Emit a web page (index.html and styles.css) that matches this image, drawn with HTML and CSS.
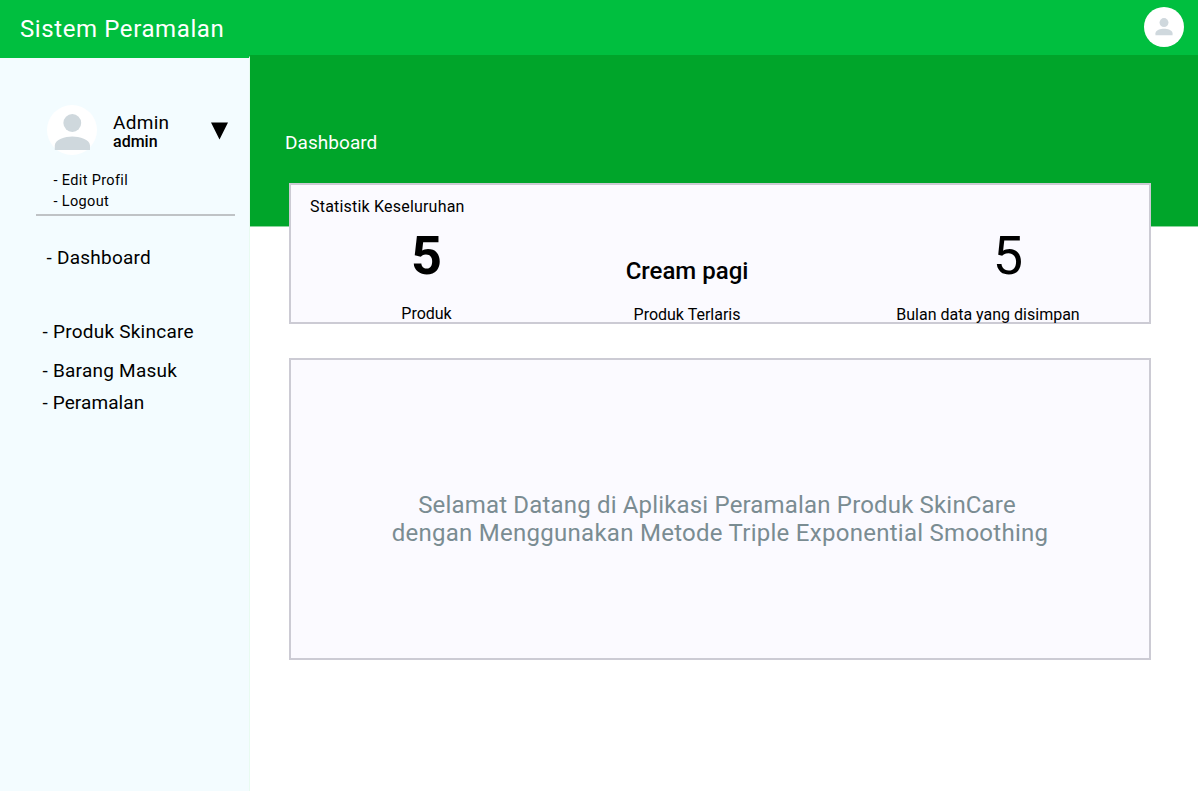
FILE: index.html
```html
<!DOCTYPE html>
<html lang="id">
<head>
<meta charset="utf-8">
<title>Sistem Peramalan</title>
<link rel="stylesheet" href="styles.css">
</head>
<body>
<header class="topbar">
  <h1 class="brand"><span>Sistem Peramalan</span></h1>
  <svg class="avatar-small" viewBox="0 0 50 50"><circle cx="25" cy="25" r="25" fill="#fff"/><circle cx="25" cy="19.5" r="5.6" fill="#cfd8dd"/><path d="M14.3 35.2v-2.4c0-4.2 6.6-5.7 10.7-5.7s10.7 1.5 10.7 5.7v2.4z" fill="#cfd8dd"/></svg>
</header>
<div class="layout">
  <aside class="sidebar">
    <div class="profile">
      <svg class="avatar" viewBox="0 0 50 50"><circle cx="25" cy="25" r="25" fill="#fff"/><circle cx="25.3" cy="18" r="8.9" fill="#cfd8dd"/><path d="M7.8 45v-4.4C7.8 34.3 18.3 31.5 25.3 31.5s17.7 2.8 17.7 9.1V45z" fill="#cfd8dd"/></svg>
      <div class="who">
        <div class="name"><span>Admin</span></div>
        <div class="role"><span>admin</span></div>
      </div>
      <svg class="caret" viewBox="0 0 17 18"><path d="M0 .5h17L8.5 17.5z" fill="#000"/></svg>
    </div>
    <div class="account">
      <div class="edit"><span>- Edit Profil</span></div>
      <div class="logout"><span>- Logout</span></div>
    </div>
    <nav class="menu">
      <div class="item first"><span>- Dashboard</span></div>
      <div class="item produk"><span>- Produk Skincare</span></div>
      <div class="item barang"><span>- Barang Masuk</span></div>
      <div class="item ramal"><span>- Peramalan</span></div>
    </nav>
  </aside>
  <main class="content">
    <h2 class="page-title"><span>Dashboard</span></h2>
    <section class="stats">
      <div class="stats-title"><span>Statistik Keseluruhan</span></div>
      <div class="stats-row">
        <div class="stat count"><div class="big bold">5</div><div class="label"><span>Produk</span></div></div>
        <div class="stat best"><div class="best-name"><span>Cream pagi</span></div><div class="label"><span>Produk Terlaris</span></div></div>
        <div class="stat months"><div class="big">5</div><div class="label"><span>Bulan data yang disimpan</span></div></div>
      </div>
    </section>
    <section class="welcome">
      <div class="line1"><span>Selamat Datang di Aplikasi Peramalan Produk SkinCare</span></div>
      <div class="line2"><span>dengan Menggunakan Metode Triple Exponential Smoothing</span></div>
    </section>
  </main>
</div>
</body>
</html>
```
FILE: styles.css
```css
* { box-sizing: border-box; }
body { margin: 0; height: 791px; overflow: hidden; background: #fff; color: #000; font-family: Roboto, sans-serif; white-space: nowrap; }
h1, h2 { margin: 0; font-weight: 400; }
svg { display: block; flex: none; }
.topbar { height: 55px; background: #00bf3f; display: flex; justify-content: space-between; padding: 7px 14.5px 0 19px; }
.brand { color: #fff; font-size: 24px; line-height: 28px; padding: 8px 0 0 1px; letter-spacing: .6px; }
.avatar-small { width: 40px; height: 40px; }
.layout { display: flex; height: 736px; background: linear-gradient(#00a52a 0 171px, #8bd69d 171px 172px, #fff 172px); }
.sidebar { width: 250px; flex: none; background: #f3fcff; border-top: 3px solid #00bf3f; border-right: 1px solid #e8fbf1; border-radius: 0 2px 0 0; padding-top: 47px; }
.profile { display: flex; height: 50px; padding-left: 47px; }
.avatar { width: 50px; height: 50px; }
.who { width: 98px; margin-left: 16px; padding-top: 7px; }
.name { font-size: 19px; line-height: 22px; letter-spacing: .3px; }
.role { font-size: 16px; line-height: 18px; font-weight: 500; margin-top: -1px; }
.caret { width: 17px; height: 18px; margin-top: 17px; }
.account { width: 199px; height: 61px; margin-left: 36px; padding: 15px 0 0 17.5px; border-bottom: 2px solid #bfc3c6; font-size: 14.5px; line-height: 21px; letter-spacing: .35px; }
.menu { padding-left: 42.5px; font-size: 19px; line-height: 24px; letter-spacing: .24px; }
.first { margin-top: 30px; padding-left: 4px; }
.produk { margin-top: 50px; }
.barang { margin-top: 15px; }
.ramal { margin-top: 8px; letter-spacing: .1px; }
.content { width: 862px; margin-left: 39px; }
.page-title { color: #fff; font-size: 19px; line-height: 24px; letter-spacing: .05px; margin: 76px 0 0 -4px; }
.stats { height: 141px; margin-top: 28px; border: 2px solid #cccbd4; background: #fbfaff; padding: 12px 0 0 19px; }
.stats-title { font-size: 16px; line-height: 20px; letter-spacing: .2px; }
.stats-row { display: flex; margin-top: 11px; }
.stat { text-align: center; }
.count { width: 233px; }
.best { width: 288px; }
.months { width: 314px; }
.big { font-size: 54px; line-height: 56px; }
.bold { font-weight: 700; }
.label { font-size: 16px; line-height: 20px; margin-top: 21px; }
.count .label { margin-top: 20px; }
.best-name { font-size: 24px; line-height: 28px; font-weight: 500; padding-top: 29px; height: 56px; }
.months .big { padding-left: 40px; }
.welcome { height: 302px; margin-top: 34px; border: 2px solid #cccbd4; background: #fbfaff; padding-top: 131px; text-align: center; color: #7a8c92; font-size: 24px; line-height: 28px; letter-spacing: .27px; }
.line1 { margin-left: -6px; letter-spacing: .17px; }
```
